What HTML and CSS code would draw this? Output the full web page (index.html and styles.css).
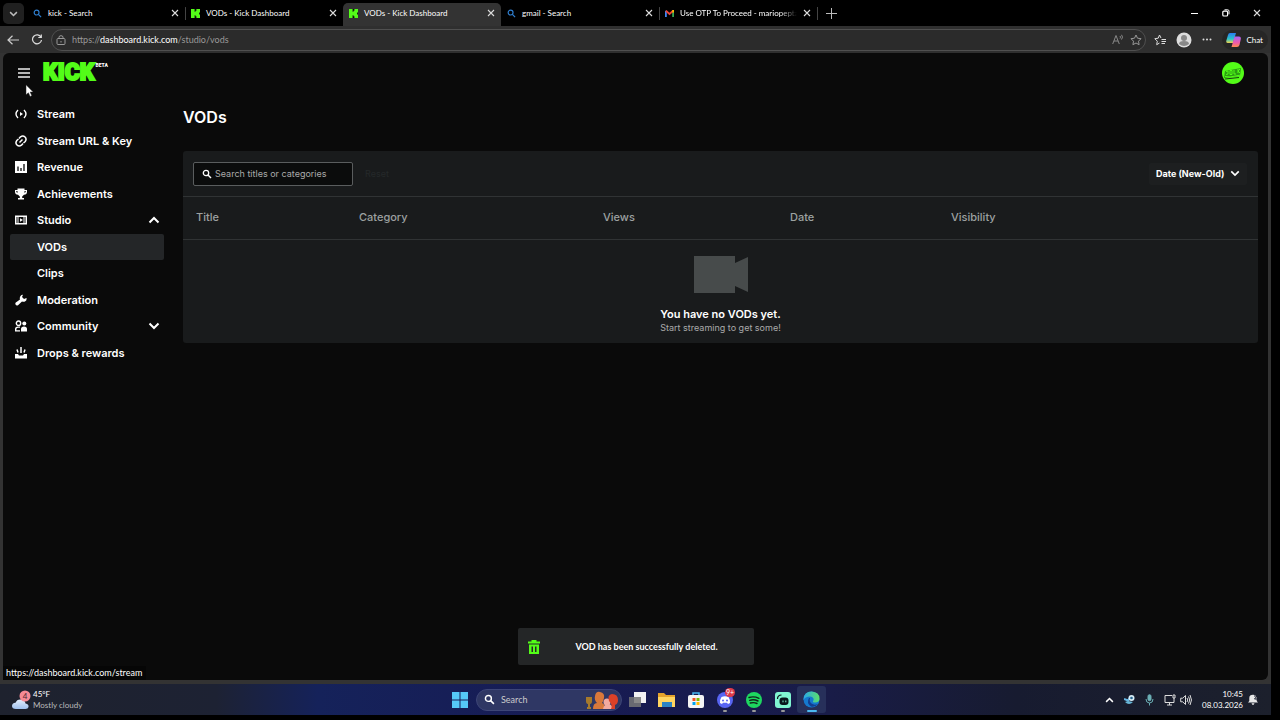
FILE: index.html
```
<!DOCTYPE html>
<html lang="en">
<head>
    <meta charset="UTF-8">
    <meta name="viewport" content="width=device-width, initial-scale=1.0">
    <title>VODs - Kick Dashboard</title>
    <link rel="stylesheet" href="styles.css">
</head>
<body>
    <svg class="sprite" width="0" height="0" aria-hidden="true">
        <symbol id="close" viewBox="0 0 8 8"><path d="M1 1l6 6M7 1L1 7" stroke="#ddd" stroke-width="1.1"/></symbol>
        <symbol id="lens" viewBox="0 0 10 10"><circle cx="4" cy="4" r="2.7" fill="none" stroke="currentColor" stroke-width="1.3"/><path d="M6 6l3 3" stroke="currentColor" stroke-width="1.4"/></symbol>
        <symbol id="kick" viewBox="0 0 10 10"><path fill="#53fc18" d="M0 0h10v10H0z"/><path fill="#0a0a0a" d="M4 0h2v2H5v1H4zM4 7h1v1h1v2H4zM9 4h1v2H9z"/></symbol>
        <symbol id="down" viewBox="0 0 12 8"><path d="M1.5 1.5L6 6l4.500-4.500" fill="none" stroke="currentColor" stroke-width="2"/></symbol>
    </svg>

    <header class="tabs">
        <button class="tab-menu" aria-label="Tab actions"><svg width="9" height="6"><use href="#down"/></svg></button>
        <div class="tab">
            <svg class="favicon blue" width="9" height="9"><use href="#lens"/></svg>
            <span class="tab-title">kick - Search</span>
            <button class="close" aria-label="Close tab"><svg width="8" height="8"><use href="#close"/></svg></button>
        </div>
        <div class="tab divided">
            <svg class="favicon" width="9" height="9"><use href="#kick"/></svg>
            <span class="tab-title">VODs - Kick Dashboard</span>
            <button class="close" aria-label="Close tab"><svg width="8" height="8"><use href="#close"/></svg></button>
        </div>
        <div class="tab active">
            <svg class="favicon" width="9" height="9"><use href="#kick"/></svg>
            <span class="tab-title">VODs - Kick Dashboard</span>
            <button class="close" aria-label="Close tab"><svg width="8" height="8"><use href="#close"/></svg></button>
        </div>
        <div class="tab">
            <svg class="favicon blue" width="9" height="9"><use href="#lens"/></svg>
            <span class="tab-title">gmail - Search</span>
            <button class="close" aria-label="Close tab"><svg width="8" height="8"><use href="#close"/></svg></button>
        </div>
        <div class="tab divided">
            <svg class="favicon" width="9" height="9" viewBox="0 0 10 10"><path d="M1 9V2" stroke="#4285f4" stroke-width="2"/><path d="M9 9V2" stroke="#34a853" stroke-width="2"/><path d="M1 2l4 3.500L9 2" fill="none" stroke="#ea4335" stroke-width="2"/><path d="M8 1h2v3H8z" fill="#fbbc04"/></svg>
            <span class="tab-title fade">Use OTP To Proceed - mariopepta</span>
            <button class="close" aria-label="Close tab"><svg width="8" height="8"><use href="#close"/></svg></button>
        </div>
        <button class="new-tab divided" aria-label="New tab"><svg width="11" height="11"><path d="M5.500 0v11M0 5.500h11" stroke="#bbb"/></svg></button>
        <div class="window-buttons">
            <button aria-label="Minimize"><svg width="8" height="8"><path d="M0 4.500h7" stroke="#fff"/></svg></button>
            <button aria-label="Restore"><svg width="8" height="8"><rect x=".8" y="2.200" width="4.800" height="4.800" rx="1" fill="none" stroke="#fff" stroke-width="1.200"/><path d="M2.500.8h3.200q1.300 0 1.300 1.300v3.200" fill="none" stroke="#fff"/></svg></button>
            <button aria-label="Close"><svg width="8" height="8"><use href="#close"/></svg></button>
        </div>
    </header>

    <div class="toolbar">
        <button aria-label="Back"><svg width="12" height="10" fill="none" stroke="#ccc" stroke-width="1.200"><path d="M12 5H1M5.500.7L1 5l4.500 4.300"/></svg></button>
        <button aria-label="Refresh"><svg width="12" height="12" fill="none" stroke="#ddd" stroke-width="1.200"><path d="M10 3.200A4.500 4.500 0 1 0 10.500 6M10.300.5v3H7.300"/></svg></button>
        <div class="address">
            <svg width="10" height="10" fill="none" stroke="#999"><rect x="1" y="3.500" width="8" height="6" rx="1"/><path d="M3 3.500V2.200Q3 .7 5 .7t2 1.500v1.300M5 6v1.500"/></svg>
            <span class="url">https://<b>dashboard.kick.com</b>/studio/vods</span>
            <button aria-label="Read aloud"><svg width="12" height="11" fill="none" stroke="#888"><path d="M.7 10L4 1.500 7.300 10M2 7h4M8 2q1 1.200 0 2.500M9.500.8q2 2.200 0 4.700"/></svg></button>
            <button aria-label="Favorite"><svg width="12" height="12" viewBox="0 0 12 12" fill="none" stroke="#999"><path d="M6 1l1.500 3.200 3.500.5-2.500 2.500.6 3.500L6 9l-3.100 1.700.6-3.500L1 4.700l3.500-.5z"/></svg></button>
        </div>
        <div class="tools">
            <button aria-label="Favorites list"><svg width="12" height="12" fill="none" stroke="#ddd"><path d="M7 4L5.500 1 4.200 4.200.8 4.700l2.500 2.500-.6 3.500L5.500 9M7.500 5.500H12M7.500 7.500H12M7.500 9.500H11"/></svg></button>
            <button aria-label="Profile"><svg width="16" height="16"><circle cx="8" cy="8" r="7.500" fill="#ddd"/><circle cx="8" cy="6" r="3" fill="#888"/><path d="M3 12q0-3 5-3t5 3q-5 4-10 0" fill="#888"/></svg></button>
            <button aria-label="More"><svg width="10" height="3" fill="#ddd"><circle cx="1.500" cy="1.500" r="1"/><circle cx="5" cy="1.500" r="1"/><circle cx="8.500" cy="1.500" r="1"/></svg></button>
        </div>
        <button class="chat">
            <svg width="15" height="14"><defs><linearGradient id="cl" x2="0" y2="1"><stop stop-color="#2b7bf0"/><stop offset=".6" stop-color="#2bc5c8"/><stop offset="1" stop-color="#f5d34a"/></linearGradient><linearGradient id="cr" x2="0" y2="1"><stop stop-color="#a864f5"/><stop offset=".6" stop-color="#ef5aa8"/><stop offset="1" stop-color="#ff8a4c"/></linearGradient></defs><path d="M4 0h6L7 10H2Q-.5 10 .5 7L2 2Q2.500 0 4 0" fill="url(#cl)"/><path d="M8.500 3.500H13q2.500 0 1.700 3L13.500 12q-.6 2-2.500 2H5.500z" fill="url(#cr)"/></svg>
            Chat
        </button>
    </div>

    <div class="frame">
        <div class="page">
            <header class="topbar">
                <button aria-label="Menu"><svg width="12" height="10"><path d="M0 1h12M0 5h12M0 9h12" stroke="#eee" stroke-width="1.700"/></svg></button>
                <a class="logo" href="#">KICK<sup>BETA</sup></a>
                <button class="avatar" aria-label="Account"><svg width="22" height="22"><circle cx="11" cy="11" r="11" fill="#53fc18"/><path d="M3 9l16-3-1 8-16 2z" fill="#2b9d12"/><path d="M3 14.500L8 15l11-2M4 9.500l2-.5v3l-2 .5M8 8.500h2v4H8zM12 8v4h2M16 7v4M18 7l-2 2 2 2" fill="none" stroke="#53fc18"/><path d="M3 17l14-1.500" stroke="#153b0c"/></svg></button>
            </header>

            <div class="layout">
                <nav class="sidebar">
                    <a href="#"><svg width="12" height="12" fill="none" stroke="#fff" stroke-width="1.400"><path d="M3 2Q-1 6 3 10M9 2q4 4 0 8"/><path d="M5 4l3 2-3 2z" fill="#fff" stroke="none"/></svg>Stream</a>
                    <a href="#"><svg width="12" height="12" fill="none" stroke="#fff" stroke-width="1.500"><path d="M4.500 7.500l3-3M4 3.500l1.500-1.700q2.500-1.800 4.500.2t.2 4.500L8.500 8M8 8.500l-1.500 1.700q-2.500 1.800-4.500-.2t-.2-4.500L3.500 4"/></svg>Stream URL &amp; Key</a>
                    <a href="#"><svg width="12" height="12"><path fill="#fff" d="M0 0h12v12H0z"/><path d="M3 5.500V10M6 7v3M9 3v7" stroke="#0a0a0a" stroke-width="1.300"/></svg>Revenue</a>
                    <a href="#"><svg width="12" height="12" fill="#fff"><path d="M2.500.5h7V2H12v2q0 2.500-3 2.800L7.200 8.500V10H9v1.500H3V10h1.800V8.500L3 6.800Q0 6.500 0 4V2h2.500zM1.300 3v1l1.200 1V3zM10.700 3v1L9.500 5V3z" fill-rule="evenodd"/></svg>Achievements</a>
                    <button><svg width="12" height="12"><path fill="#fff" d="M0 1.500h12v9H0z"/><path d="M2 3v6M10 3v6" stroke="#0a0a0a"/><path d="M3.500 3h5v6h-5z" fill="#0a0a0a"/><path d="M5 4.200L8 6 5 7.800z" fill="#fff"/></svg>Studio<svg class="chevron up" width="12" height="8"><use href="#down"/></svg></button>
                    <a class="sub current" href="#">VODs</a>
                    <a class="sub" href="#">Clips</a>
                    <a href="#"><svg width="12" height="12" fill="#fff"><path d="M8 .8L7 3l2 2 2.500-1Q12 6.500 10 7.500q-1.500.7-3 0L3 11.200Q1.500 12 .7 10.800T.8 8.500L5 5.500q-.6-2 .5-3.500Q6.500.7 8 .8"/></svg>Moderation</a>
                    <button><svg width="12" height="12" fill="#fff"><circle cx="3.500" cy="3.200" r="2.200" fill="none" stroke="#fff" stroke-width="1.400"/><circle cx="9.300" cy="3.500" r="2"/><path d="M0 11.500V9q0-2.500 3-2.500h2v1.300H3Q1.400 8 1.400 9v1.200H5v1.300zM6 11.500V9q0-2.500 3-2.500t3 2.500v2.500z"/></svg>Community<svg class="chevron" width="12" height="8"><use href="#down"/></svg></button>
                    <a href="#"><svg width="12" height="12"><path d="M6 0v6M2 2.500l1 3M10 2.500l-1 3" stroke="#fff" stroke-width="1.500"/><path fill="#fff" d="M0 7h3l1 1.500h4L9 7h3v4.500H0z"/></svg>Drops &amp; rewards</a>
                </nav>

                <main>
                    <h1>VODs</h1>
                    <section class="panel">
                        <div class="filters">
                            <label class="search">
                                <svg width="10" height="10"><use href="#lens"/></svg>
                                <input type="text" placeholder="Search titles or categories" aria-label="Search titles or categories">
                            </label>
                            <button class="reset" disabled>Reset</button>
                            <div class="sort">
                                <select aria-label="Sort by">
                                    <option>Date (New-Old)</option>
                                </select>
                                <svg width="10" height="7"><use href="#down"/></svg>
                            </div>
                        </div>
                        <table>
                            <thead>
                                <tr>
                                    <th class="col-title">Title</th>
                                    <th class="col-category">Category</th>
                                    <th class="col-views">Views</th>
                                    <th class="col-date">Date</th>
                                    <th>Visibility</th>
                                </tr>
                            </thead>
                            <tbody>
                                <tr>
                                    <td class="empty" colspan="5">
                                        <svg width="54" height="37"><path d="M0 0h41v7l13-6v35l-13-6v7H0z" fill="#474b4b"/></svg>
                                        <strong>You have no VODs yet.</strong>
                                        <p>Start streaming to get some!</p>
                                    </td>
                                </tr>
                            </tbody>
                        </table>
                    </section>
                </main>
            </div>

            <div class="toast" role="status">
                <svg width="12" height="14" fill="#53fc18"><path d="M3.500 0h5v1.500H12v2H0v-2h3.500z"/><path d="M1 4.500h10V14H1zM3.500 6.500v5.500h1.500V6.500zM7 6.500v5.500h1.500V6.500z" fill-rule="evenodd"/></svg>
                <span>VOD has been successfully deleted.</span>
            </div>
            <div class="link-status">https://dashboard.kick.com/stream</div>
            <svg class="cursor" width="10" height="14"><path d="M1 .8v10l2.400-2 1.700 3.700 1.700-.8L5.200 8h3z" fill="#fff" stroke="#222" stroke-width=".5"/></svg>
        </div>
    </div>

    <footer class="taskbar">
        <button class="weather">
            <svg width="20" height="20"><defs><linearGradient id="cloud" x2="0" y2="1"><stop stop-color="#e4eefc"/><stop offset="1" stop-color="#9fc0ee"/></linearGradient></defs><path d="M4 19q-4 0-4-3t3.500-3.200Q5 9 9 9.500t4.500 4Q17 14 16.500 17 16 19 13.500 19z" fill="url(#cloud)"/><circle cx="13" cy="6" r="5.500" fill="#f58a95"/><text x="13" y="9" text-anchor="middle" class="badge-dark">4</text></svg>
            <span>45°F<br><span class="muted">Mostly cloudy</span></span>
        </button>
        <div class="apps">
            <button class="start" aria-label="Start"><svg width="16" height="16" fill="#55c8f7"><path d="M0 0h7.500v7.500H0zM8.500 0H16v7.500H8.500zM0 8.500h7.500V16H0zM8.500 8.500H16V16H8.500z"/></svg></button>
            <label class="task-search">
                <svg width="11" height="11"><use href="#lens"/></svg>
                <input type="text" placeholder="Search" aria-label="Search">
                <svg width="34" height="18"><path d="M1 6h6v4q0 3-2 3v3h1v2H2v-2h1v-3q-2 0-2-3z" fill="#a67a2c"/><path d="M8 18q0-6 4-6-3-3-2-7 1-5 5-4 5 1 4 6-.5 3-2 5 3 1 3 6z" fill="#d9783a"/><circle cx="22" cy="11" r="3.500" fill="#f3aaa0"/><path d="M18 18q1-5 5-5t5 5z" fill="#f3aaa0"/><path d="M24 10q-2-6 3-7 6 0 6 6 0 4-3 5v4h-4q2-4-2-8" fill="#dc4128"/></svg>
            </label>
            <button class="app" aria-label="Task view"><svg width="17" height="16"><path fill="#f2f2f2" d="M5 0h12v11H5z"/><path fill="#777" fill-opacity=".85" d="M0 5h12v10H0z"/></svg></button>
            <button class="app" aria-label="File Explorer"><svg width="17" height="16"><path d="M0 1h6l2 2h9v12H0z" fill="#e5a32c"/><path d="M0 5h17v10H0z" fill="#ffd560"/><path d="M4 10h10v5H4z" fill="#2b83c4"/></svg></button>
            <button class="app" aria-label="Store"><svg width="16" height="16"><path d="M5 4V1h6v3" fill="none" stroke="#48b5f0" stroke-width="1.500"/><rect y="3" width="16" height="13" rx="2" fill="#f4f4f4"/><path d="M4.500 6h3v3h-3z" fill="#f25022"/><path d="M8.500 6h3v3h-3z" fill="#7fba00"/><path d="M4.500 10h3v3h-3z" fill="#00a4ef"/><path d="M8.500 10h3v3h-3z" fill="#ffb900"/></svg></button>
            <button class="app running" aria-label="Discord"><svg width="16" height="16"><circle cx="8" cy="8" r="8" fill="#5865f2"/><path d="M4.500 5q3.500-1.500 7 0 2 3 1.500 6l-2 1-1-1.200H6L5 12l-2-1q-.5-3 1.500-6" fill="#fff"/><circle cx="6" cy="8.500" r="1" fill="#5865f2"/><circle cx="10" cy="8.500" r="1" fill="#5865f2"/></svg><span class="badge">9+</span></button>
            <button class="app running" aria-label="Spotify"><svg width="16" height="16"><circle cx="8" cy="8" r="8" fill="#1ed760"/><path d="M3 5.500q5-1.500 10 .8M3.700 8.300q4.300-1.300 8.300.7M4.300 11q3.700-1 6.700.5" fill="none" stroke="#10251a" stroke-width="1.400" stroke-linecap="round"/></svg></button>
            <button class="app running" aria-label="Streamlabs"><svg width="16" height="16"><rect width="16" height="16" rx="3" fill="#80f5d2"/><path d="M2.500 7q0-4 4-4" fill="none" stroke="#09161d" stroke-width="1.200"/><rect x="4.500" y="5.500" width="9" height="7.500" rx="3" fill="#09161d"/><path d="M8 8.500v1.800M10.800 8.500v1.800" stroke="#80f5d2"/></svg></button>
            <button class="app running open" aria-label="Edge"><svg width="17" height="17"><defs><linearGradient id="edge"><stop stop-color="#2aa7e8"/><stop offset="1" stop-color="#5be06a"/></linearGradient></defs><circle cx="8.500" cy="8.500" r="8" fill="#1579ce"/><path d="M.5 8Q1 .5 8.500.5q8 .5 8 7 0 4-4.500 4-2.500 0-2-1.500 1-1 .5-2.500Q9.500 5.500 7 5.500 2 5.500.5 9z" fill="url(#edge)"/><path d="M6 7q-3 5 2 8.500 4 1 7-2.500-4 1.500-6.500-.5T7 7z" fill="#123f91"/></svg></button>
        </div>
        <div class="tray">
            <svg class="up" width="9" height="6"><use href="#down"/></svg>
            <svg width="11" height="11"><path d="M0 5l4 1.500L6.500 3" fill="none" stroke="#66b6e2" stroke-width="2"/><circle cx="7.500" cy="4" r="3" fill="#d7edf7"/><circle cx="7.500" cy="4" r="1.300" fill="#28638d"/><path d="M1 8q4 4 8 0l-5-1z" fill="#69b8d9"/></svg>
            <svg width="9" height="12" fill="none" stroke="#6cb0b6"><rect x="3" y=".7" width="3" height="6" rx="1.500" fill="#6cb0b6"/><path d="M1 5q0 4 3.500 4T8 5M4.500 9v2.500"/></svg>
            <svg width="12" height="12" fill="none" stroke="#ddd"><path d="M8 1.500H1v7h9V6M3 11h5M5.500 8.500V11M9 1h2v3H9zM10 4v2"/></svg>
            <svg width="12" height="12" fill="none" stroke="#ddd"><path d="M.7 4.200h2L5.500 1.500v9L2.700 7.800h-2zM7 4q1.500 2 0 4M8.500 2.500q2.500 3.500 0 7M10 1q3 5 0 10"/></svg>
            <time>10:45<br>08.03.2026</time>
            <svg width="10" height="11" fill="#e8e8e8"><path d="M0 8.500L1.300 7V4Q1.300.7 5 .7T8.700 4v3L10 8.500zM3.500 9.300h3Q6 11 5 11T3.500 9.300"/><path d="M6 2h3L6.500 5H9" fill="none" stroke="#1c2130"/></svg>
        </div>
    </footer>
</body>
</html>
```

FILE: styles.css
```
* {
    box-sizing: border-box;
}
body {
    margin: 0;
    padding: 0 9px 5px 0;
    min-height: 100vh;
    display: flex;
    flex-direction: column;
    background: #000;
    color: #fff;
    font-family: Lato, "Open Sans", sans-serif;
    font-size: 8px;
    overflow: hidden;
}
button {
    padding: 0;
    background: none;
    border: none;
    color: inherit;
    font: inherit;
    cursor: pointer;
}
a {
    color: inherit;
    text-decoration: none;
}
svg {
    display: block;
    flex: none;
}
input {
    min-width: 0;
    padding: 0;
    border: none;
    outline: none;
    background: none;
    color: inherit;
    font: inherit;
}
.sprite {
    position: absolute;
}
.up {
    transform: rotate(180deg);
}

/* tab strip */
.tabs {
    display: flex;
    height: 26px;
    padding: 3px 6px 0 3px;
}
.tab-menu {
    display: flex;
    align-items: center;
    justify-content: center;
    width: 21px;
    height: 21px;
    margin-right: 3px;
    border-radius: 5px;
    background: #202020;
    color: #bbb;
}
.tab {
    display: flex;
    align-items: center;
    gap: 6px;
    width: 158px;
    height: 23px;
    padding: 0 6px 3px;
    border-radius: 5px 5px 0 0;
}
.tab.active {
    background: #333;
}
.divided {
    background: linear-gradient(#444, #444) 0 4px / 1px 13px no-repeat;
}
.blue {
    color: #2f7fd0;
}
.tab-title {
    flex: 1;
    min-width: 0;
    white-space: nowrap;
}
.fade {
    -webkit-mask-image: linear-gradient(to right, #000 85%, transparent);
    mask-image: linear-gradient(to right, #000 85%, transparent);
}
.new-tab {
    display: flex;
    align-items: center;
    justify-content: center;
    width: 28px;
    padding-bottom: 3px;
}
.window-buttons {
    display: flex;
    gap: 23px;
    margin-left: auto;
    padding: 0 4px 3px 0;
}

/* address bar */
.toolbar {
    display: flex;
    align-items: center;
    gap: 12px;
    height: 27px;
    padding: 0 3px 0 7px;
    background: #2f2f2f;
}
.address {
    flex: 1;
    display: flex;
    align-items: center;
    gap: 6px;
    height: 22px;
    margin-left: -4px;
    padding: 0 3px 0 4px;
    border: 1px solid #505050;
    border-radius: 11px;
    background: #2b2b2b;
}
.url {
    flex: 1;
    color: #999;
    font-size: 9px;
}
.url b {
    font-weight: 400;
    color: #fff;
}
.tools {
    display: flex;
    align-items: center;
    gap: 10px;
    margin: 0 2px 0 -4px;
}
.chat {
    display: flex;
    align-items: center;
    gap: 5px;
    height: 20px;
    margin-left: -4px;
    padding: 0 5px 0 4px;
    border-radius: 10px;
    background: #262626;
}

/* dashboard */
.frame {
    flex: 1;
    display: flex;
    padding: 0 3px 4px;
    background: #333;
}
.page {
    position: relative;
    flex: 1;
    border-radius: 6px;
    background: #0a0a0a;
    font-family: Inter, sans-serif;
    font-size: 9px;
}
.topbar {
    display: flex;
    align-items: center;
    gap: 13px;
    height: 40px;
    padding: 0 24px 0 15px;
}
.logo {
    display: flex;
    font-family: Roboto, sans-serif;
    font-size: 23px;
    font-weight: 900;
    line-height: 26px;
    color: #53fc18;
    -webkit-text-stroke: 2px #53fc18;
}
.logo sup {
    padding: 2px 0 0 1px;
    font-size: 5px;
    line-height: 6px;
    color: #fff;
    -webkit-text-stroke: 0;
}
.avatar {
    margin-left: auto;
}
.layout {
    display: flex;
    gap: 19px;
    padding: 8px 10px 0 7px;
}
.sidebar {
    display: grid;
    grid-auto-rows: 1fr;
    width: 154px;
    height: 265px;
    flex: none;
}
.sidebar a,
.sidebar button {
    display: flex;
    align-items: center;
    gap: 10px;
    padding: 0 4px 0 5px;
    border-radius: 2px;
    font-size: 11px;
    font-weight: 600;
}
.sidebar .sub {
    padding-left: 27px;
}
.sidebar .current {
    background: #242628;
}
.chevron {
    margin-left: auto;
}
main {
    flex: 1;
}
h1 {
    margin: 0;
    padding: 6px 0 24px;
    font-size: 16px;
    font-weight: 600;
    line-height: 20px;
}
.panel {
    border-radius: 3px;
    background: #191b1c;
}
.filters {
    display: flex;
    align-items: center;
    gap: 12px;
    height: 45px;
    padding: 0 11px 0 10px;
}
.search {
    display: flex;
    align-items: center;
    gap: 3px;
    width: 160px;
    height: 24px;
    padding: 0 8px;
    border: 1px solid #5a5d5e;
    border-radius: 2px;
    background: #0b0c0c;
}
.search input {
    flex: 1;
}
.search input::placeholder {
    color: #aaa;
    opacity: 1;
}
.reset {
    color: #25292a;
}
.sort {
    display: flex;
    align-items: center;
    gap: 5px;
    height: 22px;
    margin-left: auto;
    padding: 0 7px;
    border-radius: 2px;
    background: #1d1f20;
}
.sort select {
    appearance: none;
    padding: 0;
    border: none;
    background: none;
    color: #fff;
    font: 700 9px Inter, sans-serif;
}
table {
    width: 100%;
    border-collapse: collapse;
    table-layout: fixed;
}
th {
    height: 43px;
    padding: 0 13px 2px;
    border: solid #303334;
    border-width: 1px 0;
    color: #9da1a1;
    font-size: 11px;
    font-weight: 500;
    text-align: left;
}
.col-title {
    width: 163px;
}
.col-category {
    width: 244px;
}
.col-views {
    width: 187px;
}
.col-date {
    width: 161px;
}
.empty {
    padding: 16px 0 8px;
    font-size: 9px;
    line-height: 14px;
    text-align: center;
}
.empty svg {
    margin: 0 auto 14px;
}
.empty strong {
    display: block;
    font-size: 11px;
    font-weight: 600;
}
.empty p {
    margin: 0;
    color: #aaa;
}
.toast {
    position: absolute;
    bottom: 15px;
    left: 50%;
    display: flex;
    align-items: center;
    width: 236px;
    height: 37px;
    padding: 0 10px;
    border-radius: 2px;
    background: #242627;
    font-family: Lato, sans-serif;
    font-weight: 700;
    transform: translateX(-50%);
}
.toast span {
    flex: 1;
    padding-left: 10px;
    text-align: center;
}
.link-status {
    position: absolute;
    bottom: 0;
    left: 0;
    padding: 0 4px 0 3px;
    background: #060606;
    font-family: Lato, sans-serif;
    line-height: 14px;
}
.cursor {
    position: absolute;
    top: 31px;
    left: 22px;
}

/* taskbar */
.taskbar {
    display: grid;
    grid-template-columns: 1fr auto 1fr;
    align-items: center;
    height: 31px;
    padding-left: 12px;
    background: linear-gradient(to right, #1e222e 0, #1d2233 17%, #15225a 25%, #171b54 45%, #191c48 65%, #171b30 80%, #1c202c);
}
.weather {
    display: flex;
    align-items: center;
    gap: 1px;
    line-height: 11px;
    text-align: left;
}
.muted {
    color: #bbb;
}
.badge-dark {
    fill: #4b2430;
    font-size: 8px;
}
.apps {
    display: flex;
    align-items: center;
    margin-left: -8px;
}
.start {
    width: 22px;
    padding: 0 3px;
    margin-right: 5px;
}
.task-search {
    display: flex;
    align-items: center;
    gap: 6px;
    width: 146px;
    height: 22px;
    margin-right: 1px;
    padding: 0 2px 0 7px;
    border: 1px solid #3d4577;
    border-radius: 11px;
    background: #2f3764;
    font-size: 9px;
}
.task-search input {
    flex: 1;
}
.task-search input::placeholder {
    color: #ccc;
    opacity: 1;
}
.app {
    position: relative;
    display: flex;
    align-items: center;
    justify-content: center;
    width: 29px;
    height: 27px;
}
.running::after {
    content: "";
    position: absolute;
    bottom: 1px;
    width: 4px;
    height: 2px;
    border-radius: 1px;
    background: #999;
}
.open {
    border-radius: 3px;
    background: #27305a;
}
.open::after {
    width: 10px;
    background: #4cb8f0;
}
.badge {
    position: absolute;
    top: 2px;
    right: 4px;
    padding: 0 1px;
    border-radius: 5px;
    background: #dd3a4a;
    font-size: 7px;
    line-height: 9px;
}
.tray {
    display: flex;
    align-items: center;
    justify-content: flex-end;
    gap: 10px;
    padding-right: 13px;
}
.tray svg:nth-child(5) {
    margin-left: -6px;
}
.tray time {
    line-height: 11px;
    text-align: right;
}
.tray svg:last-child {
    margin-left: -5px;
}
```
